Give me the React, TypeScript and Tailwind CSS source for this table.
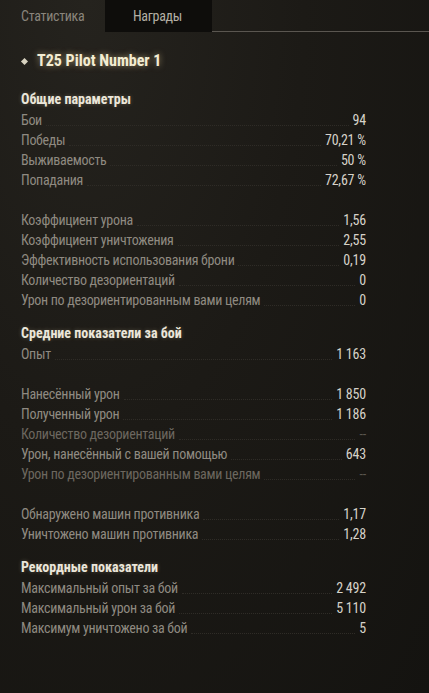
import React from "react";

type Row = { label: string; value: string; dim?: boolean } | null;

function StatRow({ label, value, dim }: { label: string; value: string; dim?: boolean }) {
  return (
    <div className="flex h-5 items-center">
      <span className={`whitespace-nowrap text-[14px] leading-5 tracking-[-0.3px] ${dim ? "text-[#6c675f]" : "text-[#8f8a81]"}`}>{label}</span>
      <span className="mx-[4px] mt-[10px] flex-1 border-b border-dotted border-[#2f2c27]" />
      <span className={`whitespace-nowrap text-[14px] leading-5 tracking-[-0.2px] ${dim ? "text-[#5a564f]" : "text-[#d6d2c9]"}`}>{value}</span>
    </div>
  );
}

function Section({ title, rows, first }: { title: string; rows: Row[]; first?: boolean }) {
  return (
    <div className={first ? "" : "mt-[13px]"}>
      <div className="h-[21px] text-[14px] font-bold leading-5 text-[#ebe6da] [text-shadow:0_0_4px_rgba(255,240,200,0.25)]">{title}</div>
      {rows.map((r, i) => (r ? <StatRow key={i} {...r} /> : <div key={i} className="h-5" />))}
    </div>
  );
}

export default function App() {
  return (
    <div className="relative h-[693px] w-[429px] overflow-hidden bg-[radial-gradient(ellipse_at_20%_0%,#25231e_0%,#1c1a16_45%,#141310_100%)] font-['Roboto_Condensed','DejaVu_Sans_Condensed',sans-serif]">
      <div className="flex h-8 items-stretch">
        <div className="flex w-[105px] items-center pl-[21px] text-[14px] tracking-[-0.3px] text-[#8a857c]">Статистика</div>
        <div className="flex w-[107px] items-center justify-center bg-[#0e0d0b] pr-[2px] text-[14px] tracking-[-0.3px] text-[#b4afa4]">Награды</div>
        <div className="flex-1 border-b border-[#5a5650]" />
      </div>
      <div className="flex h-[57px] items-center pl-[22px] pt-[1px]">
        <span className="mr-[10px] inline-block h-[5px] w-[5px] rotate-45 bg-[#d8d2c0]" />
        <span className="text-[16px] font-bold text-[#f3ecd2] [text-shadow:0_0_6px_rgba(255,230,170,0.55)]">T25 Pilot Number 1</span>
      </div>
      <div className="w-[366px] pl-[21px]">
        <Section
          first
          title="Общие параметры"
          rows={[
            { label: "Бои", value: "94" },
            { label: "Победы", value: "70,21 %" },
            { label: "Выживаемость", value: "50 %" },
            { label: "Попадания", value: "72,67 %" },
            null,
            { label: "Коэффициент урона", value: "1,56" },
            { label: "Коэффициент уничтожения", value: "2,55" },
            { label: "Эффективность использования брони", value: "0,19" },
            { label: "Количество дезориентаций", value: "0" },
            { label: "Урон по дезориентированным вами целям", value: "0" },
          ]}
        />
        <Section
          title="Средние показатели за бой"
          rows={[
            { label: "Опыт", value: "1 163" },
            null,
            { label: "Нанесённый урон", value: "1 850" },
            { label: "Полученный урон", value: "1 186" },
            { label: "Количество дезориентаций", value: "--", dim: true },
            { label: "Урон, нанесённый с вашей помощью", value: "643" },
            { label: "Урон по дезориентированным вами целям", value: "--", dim: true },
            null,
            { label: "Обнаружено машин противника", value: "1,17" },
            { label: "Уничтожено машин противника", value: "1,28" },
          ]}
        />
        <Section
          title="Рекордные показатели"
          rows={[
            { label: "Максимальный опыт за бой", value: "2 492" },
            { label: "Максимальный урон за бой", value: "5 110" },
            { label: "Максимум уничтожено за бой", value: "5" },
          ]}
        />
      </div>
    </div>
  );
}
